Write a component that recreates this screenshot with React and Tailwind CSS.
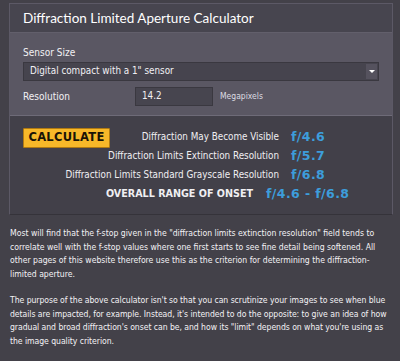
import React from "react";

const body = { fontFamily: '"DejaVu Sans Condensed", "DejaVu Sans", sans-serif' };
const title = { fontFamily: 'Lato, "Noto Sans", sans-serif' };
const wide = { fontFamily: '"DejaVu Sans", sans-serif' };

function Row({ label, value, bold, children }) {
  return (
    <div className="flex items-center h-[19px] whitespace-nowrap">
      {children}
      <div className={`flex-1 text-right text-[#f0eff2] ${bold ? "font-bold text-[9.6px] pr-[13px]" : "text-[9.8px] pr-[12px]"}`} style={bold ? wide : undefined}>{label}</div>
      <div className={`${bold ? "w-[113px]" : "w-[88px]"} shrink-0 text-[#3d9ddb] font-bold text-[12.5px] tracking-[0.4px]`} style={wide}>{value}</div>
    </div>
  );
}

export default function App() {
  return (
    <div className="w-[400px] h-[361px] bg-[#434149] overflow-hidden" style={body}>
      <div className="ml-[9px] mr-[7px] pt-[3px]">
        <div className="border border-[#5c5966] border-b-[#35333a]">
          <div className="h-[29px] bg-[#47454f] flex items-center px-[13px] border-b border-[#625f6b]">
            <span className="text-white text-[13.5px]" style={title}>Diffraction Limited Aperture Calculator</span>
          </div>
          <div className="bg-[#5a5763] px-[13px] pt-[14px] pb-[9px] border-b border-[#6e6b78]">
            <div className="text-[#f2f1f4] text-[10px] leading-[12px]">Sensor Size</div>
            <div className="mt-[3px] h-[19px] bg-[#46444e] border border-[#3a3840] flex items-center pl-[6px] pr-[1px]">
              <span className="flex-1 text-[#f2f1f4] text-[9.8px]">Digital compact with a 1" sensor</span>
              <div className="w-[11px] h-[15px] bg-[#55525e] flex items-center justify-center">
                <div className="w-0 h-0 border-l-[3px] border-r-[3px] border-t-[3px] border-l-transparent border-r-transparent border-t-white" />
              </div>
            </div>
            <div className="flex items-center mt-[6px]">
              <div className="w-[112px] text-[#f2f1f4] text-[10px]">Resolution</div>
              <div className="w-[78px] h-[19px] bg-[#47454f] border border-[#3a3840] flex items-center pl-[6px] text-[#f2f1f4] text-[9.8px]">14.2</div>
              <div className="ml-[7px] text-[#dddce2] text-[8.5px]">Megapixels</div>
            </div>
          </div>
          <div className="bg-[#424049] px-[13px] pt-[12px] pb-[10px]">
            <Row label="Diffraction May Become Visible" value="f/4.6">
              <div className="w-[87px] h-[20px] shrink-0 bg-[#f7b829] border border-[#b07a12] rounded-[1px] flex items-center justify-center text-[11.5px] font-bold text-[#1a1406] tracking-[0.3px]" style={wide}>CALCULATE</div>
            </Row>
            <Row label="Diffraction Limits Extinction Resolution" value="f/5.7" />
            <Row label="Diffraction Limits Standard Grayscale Resolution" value="f/6.8" />
            <Row label="OVERALL RANGE OF ONSET" value="f/4.6 - f/6.8" bold />
          </div>
        </div>
      </div>
      <div className="pl-[10px] pr-[4px] pt-[12px] text-[#f3f2f5] text-[8.6px] leading-[13.5px]">
        <p className="pr-[6px]">Most will find that the f-stop given in the "diffraction limits extinction resolution" field tends to correlate well with the f-stop values where one first starts to see fine detail being softened. All other pages of this website therefore use this as the criterion for determining the diffraction-limited aperture.</p>
        <p className="mt-[13px] tracking-[-0.05px]">The purpose of the above calculator isn't so that you can scrutinize your images to see when blue details are impacted, for example. Instead, it's intended to do the opposite: to give an idea of how gradual and broad diffraction's onset can be, and how its "limit" depends on what you're using as the image quality criterion.</p>
      </div>
    </div>
  );
}
